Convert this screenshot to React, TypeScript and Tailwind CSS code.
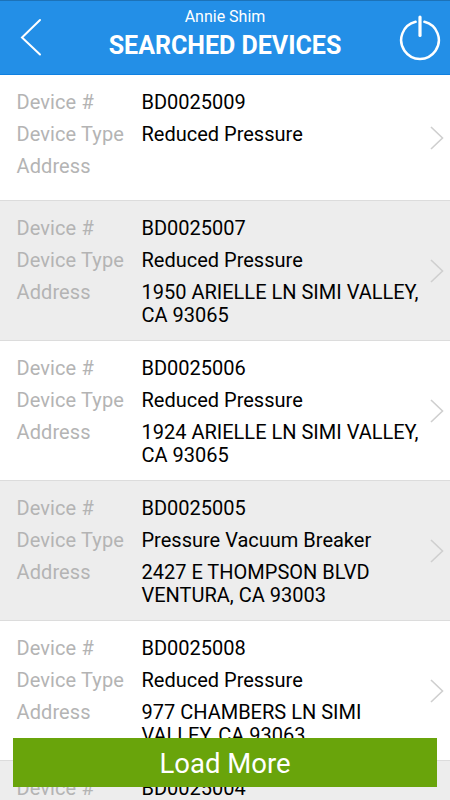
import React from "react";

const devices = [
  { id: "BD0025009", type: "Reduced Pressure", address: [] },
  {
    id: "BD0025007",
    type: "Reduced Pressure",
    address: ["1950 ARIELLE LN SIMI VALLEY,", "CA 93065"],
  },
  {
    id: "BD0025006",
    type: "Reduced Pressure",
    address: ["1924 ARIELLE LN SIMI VALLEY,", "CA 93065"],
  },
  {
    id: "BD0025005",
    type: "Pressure Vacuum Breaker",
    address: ["2427 E THOMPSON BLVD", "VENTURA, CA 93003"],
  },
  {
    id: "BD0025008",
    type: "Reduced Pressure",
    address: ["977 CHAMBERS LN SIMI", "VALLEY, CA 93063"],
  },
  { id: "BD0025004", type: "Reduced Pressure", address: [] },
];

const Header = () => {
  return (
    <header className="flex h-[75px] shrink-0 items-start justify-between border-t border-[#1c72b8] border-b border-b-[#0f80e0] bg-[#238fe7] text-white">
      {/* Back button */}
      <button aria-label="Back" className="mt-[17px] ml-5">
        <svg className="h-10 w-[22px]" viewBox="0 0 22 40" fill="none">
          <path
            d="M20 2L2 19.5L20 36.5"
            stroke="currentColor"
            strokeWidth="2"
            strokeLinecap="round"
          />
        </svg>
      </button>

      <div className="mt-[6px] ml-[10px] text-center">
        <p className="text-base leading-5">Annie Shim</p>
        <h1 className="text-[25px] leading-[37px] font-bold whitespace-nowrap">
          SEARCHED DEVICES
        </h1>
      </div>

      {/* Power button */}
      <button aria-label="Log out" className="mt-[13px] mr-2">
        <svg className="h-[47px] w-11" viewBox="0 0 44 47" fill="none">
          <path
            d="M17.6 7.8A18.8 18.8 0 1 0 26.4 7.8"
            stroke="currentColor"
            strokeWidth="2.5"
            strokeLinecap="round"
          />
          <path
            d="M22 3V21.5"
            stroke="currentColor"
            strokeWidth="3.2"
            strokeLinecap="round"
          />
        </svg>
      </button>
    </header>
  );
};

const DeviceRow = ({ device }: { device: (typeof devices)[number] }) => {
  return (
    <li className="flex min-h-[126px] shrink-0 items-center border-b border-[#dcdcdc] bg-white pr-[6px] pl-[16.5px] even:bg-[#ededed]">
      <dl className="grid flex-1 grid-cols-[125px_1fr] gap-y-2 self-start pt-[15px] pb-[13px] text-[20px] leading-6 whitespace-nowrap">
        <dt className="tracking-[0.1px] text-[#b4b4b4]">Device #</dt>
        <dd>{device.id}</dd>
        <dt className="tracking-[0.1px] text-[#b4b4b4]">Device Type</dt>
        <dd>{device.type}</dd>
        <dt className="tracking-[0.1px] text-[#b4b4b4]">Address</dt>
        <dd>
          {device.address.map((line) => (
            <p key={line} className="leading-[23px] first:leading-6">
              {line}
            </p>
          ))}
        </dd>
      </dl>
      <svg className="h-6 w-[14px]" viewBox="0 0 14 24" fill="none">
        <path d="M1 1L12.5 12L1 23" stroke="#cfcfcf" strokeWidth="1.6" />
      </svg>
    </li>
  );
};

const App = () => {
  return (
    <div className="relative flex h-[800px] w-[450px] flex-col overflow-hidden bg-white font-['Roboto',sans-serif] text-black">
      <Header />
      <ul className="flex min-h-0 flex-1 flex-col overflow-hidden">
        {devices.map((device) => (
          <DeviceRow key={device.id} device={device} />
        ))}
      </ul>

      {/* Floats over the end of the list */}
      <button className="absolute bottom-[13px] left-[13px] h-[49px] w-[424px] bg-[#69a40b] pt-[3px] text-[27.5px] leading-[46px] text-white">
        Load More
      </button>
    </div>
  );
};

export default App;
